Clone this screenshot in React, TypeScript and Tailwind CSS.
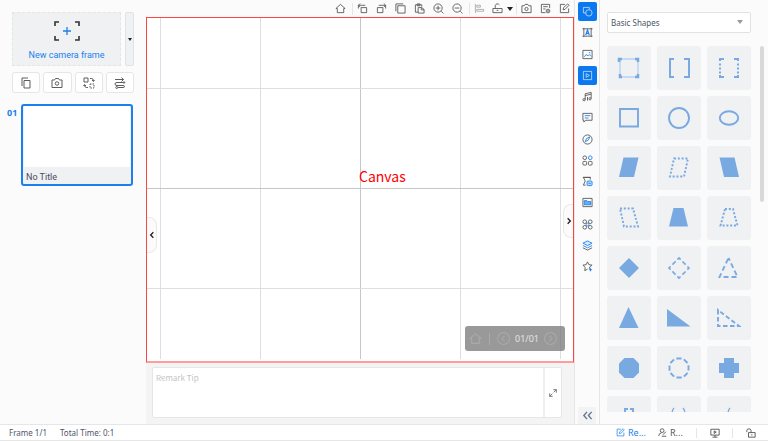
import type { ReactNode } from "react";

const Icon = ({ children, className = "size-3" }: { children: ReactNode; className?: string }) => (
  <svg viewBox="0 0 24 24" className={`${className} shrink-0`} fill="none" stroke="currentColor" strokeWidth={1.9} aria-hidden="true">
    {children}
  </svg>
);

const BLUE = "#1a7fee";

const icons = {
  home: <path d="M2 12 12 3l10 9h-3v9H5v-9Z" />,
  rotateLeft: <path d="M9 10h12v11H9ZM18 5H3M7 1 3 5l4 4M3 5v7" />,
  rotateRight: <path d="M3 10h12v11H3ZM6 5h15M17 1l4 4-4 4M21 5v7" />,
  copy: <path d="M6 6h16v16H6ZM2 18V2h16" />,
  paste: <path d="M9 20H3V4h14v4M7 2h6v4H7ZM9 10h8l5 4v8H9ZM16 10v5h6" />,
  zoomIn: <path d="M2 11a9 9 0 1 0 18 0 9 9 0 1 0-18 0M11 6v10M6 11h10M18 18l5 5" />,
  zoomOut: <path d="M2 11a9 9 0 1 0 18 0 9 9 0 1 0-18 0M6 11h10M18 18l5 5" />,
  align: <path d="M3 2v20M6 5h8v4H6ZM6 14h15v4H6Z" />,
  unlock: <path d="M2 12h20v9H2ZM7 12V6a5 5 0 0 1 9-2M10 16h4" />,
  camera: (
    <>
      <path d="M2 6h5l2-3h6l2 3h5v15H2Z" />
      <circle cx="12" cy="13" r="3.500" />
    </>
  ),
  report: (
    <>
      <path d="M12 21H3V3h18v8M7 8h10M7 13h5" />
      <circle cx="17.500" cy="17.500" r="4" />
      <circle cx="17.500" cy="17.500" r="1" />
    </>
  ),
  edit: <path d="M13 3H3v18h18V12M9 15l1-5 9-8 3 3-9 9Z" />,
};

const SIDE_TOOLS = [
  { label: "Shapes", active: true, art: <><path d="M9 15H3V3h13v5" /><circle cx="15" cy="15" r="7" /></> },
  { label: "Text", art: <><path d="M4 2v20M20 2v20M1 4h22M1 20h22" /><path d="m8 18 4-12 4 12M9.500 14h5" stroke={BLUE} strokeWidth={2.4} /></> },
  { label: "Image", art: <><path d="M2 3h20v18H2Z" /><path d="m5 17 4-5 4 3 3-3 4 4" stroke={BLUE} /><path d="M15 8h3" stroke={BLUE} /></> },
  { label: "Video", active: true, art: <><path d="M3 3h18v18H3Z" /><path d="m9 8 7 4-7 4Z" /></> },
  { label: "Music", art: <><path d="M7 19V6l13-3v13M7 10l13-3" /><circle cx="4.500" cy="19" r="2.500" /><circle cx="17.500" cy="17" r="2.500" /><path d="M12 13v8" /></> },
  { label: "Comment", art: <><path d="M2 3h20v15H8l-4 4v-4H2Z" /><path d="M6 8h12M6 13h8" stroke={BLUE} /></> },
  { label: "Symbols", art: <><circle cx="12" cy="12" r="10" /><path d="m7 17 3-7 7-4-3 7Z" stroke={BLUE} /></> },
  { label: "Components", art: <><circle cx="6" cy="6" r="4" /><circle cx="18" cy="6" r="4" stroke={BLUE} /><rect x="2" y="14" width="8" height="8" rx="2" /><rect x="14" y="14" width="8" height="8" rx="2" /></> },
  { label: "Formula", art: <><path d="M18 8V3H3l4 8-4 9h5M2 3h17" /><rect x="11" y="11" width="11" height="10" rx="2" fill="#b9dcff" stroke={BLUE} /><path d="M14 16h5" stroke={BLUE} /></> },
  { label: "Flash", art: <><path d="M5 8h6l2 2h6v7H5Z" fill="#64adf8" stroke={BLUE} /><path d="M2 3h20v18H2Z" /></> },
  { label: "Combine", art: <><circle cx="6" cy="6" r="4" /><circle cx="18" cy="6" r="4" /><circle cx="6" cy="18" r="4" /><circle cx="18" cy="18" r="4" /><circle cx="12" cy="12" r="3" stroke={BLUE} /></> },
  { label: "Layers", art: <><path d="m12 2 10 5-10 5L2 7Z" stroke={BLUE} fill="#d5eaff" /><path d="m2 12 10 5 10-5" stroke={BLUE} /><path d="m2 17 10 5 10-5" /></> },
  { label: "Favorites", art: <><path d="m16 17 1-4 5-4-7-1-3-6-3 6-7 1 5 5-1 7 6-3" /><path d="M15 19h7M18.500 15.500v7" stroke={BLUE} /></> },
];

const DOT = "2 1.8";
const DASH = "5 3";

const SHAPES = [
  { label: "Corner frame", art: <><path d="M3 3h18v18H3Z" stroke="#c5daf2" /><path d="M2 6V3h3M18 3h3v3M21 18v3h-3M5 21H3v-3" strokeWidth={2.5} /></> },
  { label: "Brackets", art: <path d="M7 3H3v18h4M17 3h5v18h-5" strokeWidth={2} /> },
  { label: "Dashed brackets", art: <><path d="M7 3H3v2M3 19v2h4M17 3h4v2M21 19v2h-4" strokeWidth={2} /><path d="M3 7.500v11M21 7.500v11" strokeDasharray="2 2" strokeWidth={2} /></> },
  { label: "Square", art: <path d="M3 3h18v17.500H3Z" /> },
  { label: "Circle", art: <circle cx="12" cy="12" r="10" /> },
  { label: "Ellipse", art: <ellipse cx="12" cy="12" rx="9.200" ry="6.800" /> },
  { label: "Parallelogram", art: <path d="M6.500 1.500h15L17 21H2Z" fill="currentColor" stroke="none" /> },
  { label: "Dashed parallelogram", art: <path d="M7 2.500h14L17 20.500H3Z" strokeDasharray={DOT} /> },
  { label: "Reverse parallelogram", art: <path d="M2.500 1.500h15L22 21H7Z" fill="currentColor" stroke="none" /> },
  { label: "Dashed reverse parallelogram", art: <path d="M3 2.500h13L21 20.500H7Z" strokeDasharray={DOT} /> },
  { label: "Trapezoid", art: <path d="M6.500 2h10L21 20.500H2Z" fill="currentColor" stroke="none" /> },
  { label: "Dashed trapezoid", art: <path d="M8 3h8l4.500 16.500h-17Z" strokeDasharray={DOT} /> },
  { label: "Diamond", art: <path d="m12 2 10 10-10 10L2 12Z" fill="currentColor" stroke="none" /> },
  { label: "Dashed diamond", art: <path d="m12 2 10 10-10 10L2 12Z" strokeDasharray="4.500 2.570" strokeDashoffset={2.2} strokeWidth={1.6} /> },
  { label: "Dashed triangle", art: <path d="m11.500 2 9 19H2.500Z" strokeDasharray={DASH} strokeDashoffset={2} /> },
  { label: "Triangle", art: <path d="m11.500 1 10 21H2Z" fill="currentColor" stroke="none" /> },
  { label: "Right triangle", art: <path d="m0 3 23.500 17.500H0Z" fill="currentColor" stroke="none" /> },
  { label: "Dashed right triangle", art: <path d="M1 4v16h21Z" strokeDasharray="4.500 2.500" /> },
  { label: "Octagon", art: <path d="M7.500 2h9L22 7.500v9L16.500 22h-9L2 16.500v-9Z" fill="currentColor" stroke="none" /> },
  { label: "Dashed octagon", art: <path d="M8 2.500h8L21.500 8v8L16 21.500H8L2.500 16V8Z" strokeDasharray="5.200 2.690" strokeDashoffset={-1.3} /> },
  { label: "Cross", art: <path d="M7 2h10v5h5v10h-5v5H7v-5H2V7h5Z" fill="currentColor" stroke="none" /> },
  { label: "Cross brackets", art: <path d="M8 6V3h3M13 3h3v3M21 9v6M3 9v6M8 18v3h3M13 21h3v-3" /> },
  { label: "Parentheses", art: <path d="M7 2q-2 2-2 6v8q0 4 2 6M16 2q2 2 2 6v8q0 4-2 6" strokeWidth={1.3} /> },
  { label: "Parenthesis", art: <path d="M13 2q-2 2-2 6v8q0 4 2 6" strokeWidth={1.3} /> },
];

function ToolButton({ label, children, className = "w-[19px]" }: { label: string; children: ReactNode; className?: string }) {
  return (
    <button type="button" aria-label={label} className={`flex h-full items-center justify-center gap-1 ${className}`}>
      <Icon className="size-[11px]">{children}</Icon>
      {label === "Unlock" && <span className="border-x-[3px] border-t-4 border-x-transparent border-t-[#222]" />}
    </button>
  );
}

const Separator = ({ className = "h-3 bg-[#e6e6e6]" }: { className?: string }) => <span className={`w-px ${className}`} />;

function Sidebar() {
  const actions = [
    { label: "Duplicate frame", art: <path d="M8 7h12v15H8ZM4 18V2h12" /> },
    { label: "Capture frame", art: icons.camera },
    { label: "Replace frame", art: <><path d="M2 2h8v8H2ZM14 3h3q4 0 4 5M18 6l3 3 2-3M10 21H7q-4 0-4-5M1 18l2-3 3 3" /><path d="M14 14h8v8h-8Z" strokeDasharray="3 2" /></> },
    { label: "Edit path", art: <><path d="M2 5h17M15 1l4 4-4 4M19 11H6q-4 0-4 3t4 3h12" /><circle cx="20" cy="11" r="1.500" /><path d="M18 17q3 0 3 2t-3 2H8" /><circle cx="5.500" cy="21" r="2" /></> },
  ];
  return (
    <aside className="w-[146px] shrink-0 bg-[#fbfbfb] pt-3 font-[Roboto,sans-serif]">
      <div className="flex h-[54px] gap-1 pr-3 pl-3">
        <button type="button" className="flex flex-1 flex-col items-center border border-dashed border-[#e3e6e8] bg-[#eff1f3] pt-2 text-[9px] leading-3 text-[#1a7fee]">
          <svg viewBox="0 0 26 20" className="mb-2 h-5 w-[26px]" fill="none" aria-hidden="true">
            <path d="M1 5V1h4M21 1h4v4M25 15v4h-4M5 19H1v-4" stroke="#333" strokeWidth={1.6} />
            <path d="M13 6v8M9 10h8" stroke={BLUE} strokeWidth={1.3} />
          </svg>
          New camera frame
        </button>
        <button type="button" aria-label="Frame options" className="flex w-[9px] items-center justify-center rounded-xs border border-[#e1e4e7] bg-[#eff1f3]">
          <span className="border-x-2 border-t-[3px] border-x-transparent border-t-[#222]" />
        </button>
      </div>
      <div className="mt-1.5 flex gap-[3px] pr-3 pl-3">
        {actions.map((a) => (
          <button key={a.label} type="button" aria-label={a.label} className="flex h-[21px] flex-1 items-center justify-center rounded-[3px] border border-[#e6e6e6] bg-white text-[#555]">
            <Icon>{a.art}</Icon>
          </button>
        ))}
      </div>
      <div className="mt-[11px] flex pr-[13px] pl-[7px]">
        <span className="w-3.5 pt-[3px] font-['Noto_Sans',sans-serif] text-[9px] leading-3 font-bold text-[#1a7fee]">01</span>
        <button type="button" className="flex h-[82px] flex-1 flex-col rounded-[3px] border-2 border-[#1a80f0] bg-[#eff1f3] text-left">
          <span className="mx-px flex-1 self-stretch bg-white" />
          <span className="px-[3px] pt-1 pb-px text-[9px] leading-3 text-[#474d5c]">No Title</span>
        </button>
      </div>
    </aside>
  );
}

function Toolbar() {
  return (
    <div className="flex h-[17px] shrink-0 items-center justify-end bg-[#fbfbfb] text-[#555]">
      <ToolButton label="Home">{icons.home}</ToolButton>
      <Separator className="ml-0.5 h-3 bg-[#e6e6e6]" />
      <ToolButton label="Rotate left">{icons.rotateLeft}</ToolButton>
      <ToolButton label="Rotate right">{icons.rotateRight}</ToolButton>
      <ToolButton label="Copy">{icons.copy}</ToolButton>
      <ToolButton label="Paste">{icons.paste}</ToolButton>
      <ToolButton label="Zoom in">{icons.zoomIn}</ToolButton>
      <ToolButton label="Zoom out">{icons.zoomOut}</ToolButton>
      <Separator className="ml-0.5 h-3 bg-[#e6e6e6]" />
      <ToolButton label="Align" className="w-[19px] text-[#aaa]">{icons.align}</ToolButton>
      <ToolButton label="Unlock" className="w-[27px]">{icons.unlock}</ToolButton>
      <Separator />
      <ToolButton label="Screenshot">{icons.camera}</ToolButton>
      <ToolButton label="Report">{icons.report}</ToolButton>
      <ToolButton label="Edit">{icons.edit}</ToolButton>
    </div>
  );
}

function Canvas() {
  return (
    <section className="relative flex-1 overflow-hidden border border-b-2 border-[#f44] border-b-[#ff9c9c] bg-white">
      <svg className="absolute top-0 left-0 h-[calc(100%-2px)] w-full" stroke="#dedede" aria-hidden="true">
        {[13.5, 113.5, 313.5, 413.5].map((x) => (
          <line key={x} x1={x} x2={x} y1="0" y2="100%" />
        ))}
        <line x1="213.5" x2="213.5" y1="0" y2="100%" stroke="#c6c6c6" />
        {[70.5, 270.5].map((y) => (
          <line key={y} x1="0" x2="100%" y1={y} y2={y} />
        ))}
        <line x1="0" x2="100%" y1="170.5" y2="170.5" stroke="#c6c6c6" />
      </svg>
      <h1 className="absolute top-[148px] left-[212px] font-['Noto_Sans_CJK_SC',sans-serif] text-[14px] leading-5 text-[#f00]">Canvas</h1>
      <button type="button" aria-label="Collapse left" className="absolute top-[199px] left-0 flex h-9 w-2.5 items-center justify-center rounded-r-lg border border-l-0 border-[#e9e9e9] bg-[#fbfbfb] text-[#222]">
        <Icon className="size-2"><path d="m16 4-8 8 8 8" strokeWidth={4} /></Icon>
      </button>
      <button type="button" aria-label="Collapse right" className="absolute top-[186px] right-0 flex h-[34px] w-2.5 items-center justify-center rounded-l-lg border border-r-0 border-[#e9e9e9] bg-[#fbfbfb] text-[#222]">
        <Icon className="size-2"><path d="m8 4 8 8-8 8" strokeWidth={4} /></Icon>
      </button>
      <div className="absolute right-2 bottom-2.5 flex h-[25px] w-[100px] items-center rounded-[3px] bg-[#777]/75 pl-1 text-[#aaa]">
        <button type="button" aria-label="First frame"><Icon className="size-[13px]">{icons.home}</Icon></button>
        <Separator className="mx-[7px] h-3 bg-[#aaa]" />
        <button type="button" aria-label="Previous frame">
          <Icon className="size-[13px]"><circle cx="12" cy="12" r="11" /><path d="m14 7-5 5 5 5" /></Icon>
        </button>
        <span className="mx-[5px] text-[9px] leading-3 text-[#e4e4e4]">01/01</span>
        <button type="button" aria-label="Next frame">
          <Icon className="size-[13px]"><circle cx="12" cy="12" r="11" /><path d="m10 7 5 5-5 5" /></Icon>
        </button>
      </div>
    </section>
  );
}

function Remark() {
  return (
    <div className="h-[61px] shrink-0 bg-[#f4f4f4] pt-1 pr-3 pb-1.5 pl-1.5">
      <div className="flex h-[51px] rounded-xs border border-[#e6e6e6] bg-white">
        <textarea aria-label="Remark" placeholder="Remark Tip" className="min-w-0 flex-1 resize-none border-r-2 border-[#f0f0f0] px-[3px] py-1 font-['Noto_Sans_CJK_SC',sans-serif] text-[8px] leading-3 outline-none placeholder:text-[#c4c4c4]" />
        <button type="button" aria-label="Expand remark" className="flex w-4 items-center justify-center text-[#666]">
          <Icon className="size-2"><path d="M13 2h9v9M22 2l-8 8M11 22H2v-9M2 22l8-8" strokeWidth={2.6} /></Icon>
        </button>
      </div>
    </div>
  );
}

function SideTools() {
  return (
    <nav className="flex w-[26px] shrink-0 flex-col items-center justify-between border-x border-[#e6e6e6] bg-[#fbfbfb] pt-0.5 text-[#555]">
      <div className="flex h-[274px] flex-col justify-between">
        {SIDE_TOOLS.map((tool) => (
          <button
            key={tool.label}
            type="button"
            aria-label={tool.label}
            className={`flex size-[19px] items-center justify-center rounded-xs ${tool.active ? "bg-[#0b78ee] text-[#b8dafc]" : ""}`}
          >
            <Icon className="size-[11px]">{tool.art}</Icon>
          </button>
        ))}
      </div>
      <button type="button" aria-label="Expand panel" className="flex h-[17px] w-[18px] items-center justify-center bg-[#f2f3f5] text-[#66758a]">
        <Icon className="size-[11px]"><path d="m11 4-7 8 7 8M21 4l-7 8 7 8" strokeWidth={3} /></Icon>
      </button>
    </nav>
  );
}

function ShapesPanel() {
  return (
    <aside className="flex w-[168px] shrink-0 flex-col bg-[#fbfbfb] pt-3 pl-[7px]">
      <div className="relative mr-[17px] flex">
        <select aria-label="Shape category" className="h-[21px] w-full appearance-none rounded-xs border border-[#e2e2e2] bg-white pl-[3px] text-[8px] text-[#4c5568] outline-none">
          <option>Basic Shapes</option>
        </select>
        <span className="pointer-events-none absolute top-2 right-2 border-x-[3px] border-t-4 border-x-transparent border-t-[#999]" />
      </div>
      <div className="mt-[13px] mb-3 flex min-h-0 flex-1">
        <div className="grid flex-1 auto-rows-[44px] grid-cols-3 gap-1.5 overflow-hidden">
          {SHAPES.map((shape) => (
            <button key={shape.label} type="button" aria-label={shape.label} className="flex items-center justify-center rounded-[3px] bg-[#f0f1f3] text-[#79a9e1]">
              <Icon className="size-6">{shape.art}</Icon>
            </button>
          ))}
        </div>
        <span className="mr-1 ml-[9px] h-[156px] w-1 rounded-full bg-[#d9d9d9]" />
      </div>
    </aside>
  );
}

function Footer() {
  return (
    <footer className="flex h-[17px] shrink-0 items-center border-y border-[#e6e6e6] bg-white pr-3 pl-[9px] text-[8px] leading-3 text-[#4c5568]">
      <span className="mr-[13px]">Frame 1/1</span>
      <span className="flex-1">Total Time: 0:1</span>
      <button type="button" className="flex w-7 items-center gap-[3px] text-[9px] text-[#1a7fee]">
        <Icon className="size-[9px]">{icons.edit}</Icon>
        Re...
      </button>
      <button type="button" className="ml-3.5 flex w-[26px] items-center gap-[3px] text-[9px] text-[#555]">
        <Icon className="size-[9px]">
          <circle cx="11" cy="7" r="5" strokeWidth={2.4} />
          <path d="M2 21q0-7 7-8M10 22h12M13 18l8-8" strokeWidth={2.4} />
        </Icon>
        R...
      </button>
      <Separator className="ml-3 h-2.5 bg-[#e6e6e6]" />
      <button type="button" aria-label="Present" className="ml-[13px] text-[#444]">
        <Icon className="size-2.5"><path d="M2 3h20v14H2ZM12 17v5M6 22h12M10 7l5 3-5 3Z" strokeWidth={2} /></Icon>
      </button>
      <Separator className="ml-3 h-2.5 bg-[#e6e6e6]" />
      <button type="button" aria-label="Lock" className="ml-[13px] text-[#444]">
        <Icon className="size-2.5"><path d="M6 11h16v11H6ZM2 10V6q0-4 5-4t5 4v5M14 15v3" strokeWidth={2} /></Icon>
      </button>
    </footer>
  );
}

export default function App() {
  return (
    <div className="flex h-screen flex-col overflow-hidden bg-white font-['Noto_Sans',sans-serif]">
      <div className="flex min-h-0 flex-1">
        <Sidebar />
        <main className="flex min-w-0 flex-1 flex-col">
          <Toolbar />
          <Canvas />
          <Remark />
        </main>
        <SideTools />
        <ShapesPanel />
      </div>
      <Footer />
    </div>
  );
}
